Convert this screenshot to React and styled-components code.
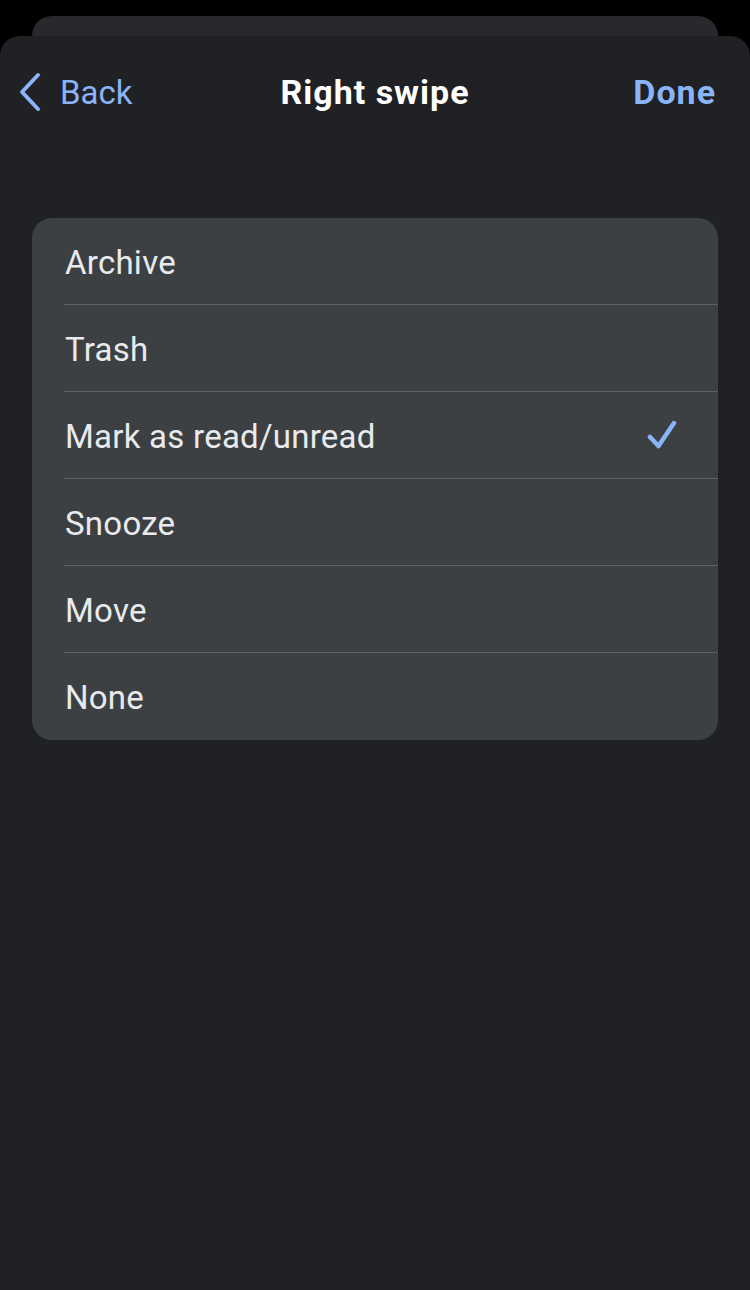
import React from "react";
import styled, { createGlobalStyle } from "styled-components";

const Global = createGlobalStyle`
  html, body { margin: 0; padding: 0; background: #000; }
  body { font-family: Roboto, "Noto Sans", sans-serif; -webkit-font-smoothing: antialiased; }
`;

const Screen = styled.div`
  width: 750px;
  height: 1290px;
  background: #000;
  padding-top: 16px;
  box-sizing: border-box;
  display: flex;
  flex-direction: column;
  overflow: hidden;
`;

const BackCard = styled.div`
  margin: 0 32px;
  height: 20px;
  background: #28292d;
  border-radius: 20px 20px 0 0;
  flex-shrink: 0;
`;

const Sheet = styled.div`
  flex: 1;
  background: #202124;
  border-radius: 20px 20px 0 0;
  display: flex;
  flex-direction: column;
`;

const NavBar = styled.div`
  height: 112px;
  display: grid;
  grid-template-columns: 1fr auto 1fr;
  align-items: center;
  padding: 0 34px 0 18px;
`;

const BackButton = styled.button`
  justify-self: start;
  display: flex;
  align-items: center;
  gap: 18px;
  background: none;
  border: none;
  padding: 0;
  color: #8ab4f8;
  font-family: inherit;
  font-size: 33px;
  font-weight: 400;
`;

const Title = styled.h1`
  margin: 0;
  padding-left: 16px;
  color: #ffffff;
  font-size: 34px;
  font-weight: 700;
  letter-spacing: 1px;
`;

const DoneButton = styled.button`
  justify-self: end;
  background: none;
  border: none;
  padding: 0;
  color: #8ab4f8;
  font-family: inherit;
  font-size: 34px;
  font-weight: 700;
  letter-spacing: 1px;
`;

const List = styled.ul`
  list-style: none;
  margin: 70px 32px 0;
  padding: 0;
  background: #3c4043;
  border-radius: 20px;
  overflow: hidden;
`;

const Row = styled.li`
  height: 87px;
  box-sizing: border-box;
  margin-left: 32px;
  padding: 2px 35px 0 1px;
  display: flex;
  align-items: center;
  justify-content: space-between;
  color: #e8eaed;
  font-size: 33px;
  letter-spacing: 0.25px;
  box-shadow: ${(p) => (p.$last ? "none" : "inset 0 -1px 0 #5f6368")};
`;

const Check = () => (
  <svg width="36" height="34" viewBox="0 0 36 34" fill="none">
    <path d="M3 17 L11.5 26 L27 3" stroke="#8ab4f8" strokeWidth="4.5" strokeLinecap="round" strokeLinejoin="round" />
  </svg>
);

const Chevron = () => (
  <svg width="24" height="40" viewBox="0 0 24 40" fill="none">
    <path d="M20 3 L4 20 L20 37" stroke="#8ab4f8" strokeWidth="4" strokeLinecap="round" strokeLinejoin="round" />
  </svg>
);

const options = ["Archive", "Trash", "Mark as read/unread", "Snooze", "Move", "None"];

export default function App() {
  return (
    <Screen>
      <Global />
      <BackCard />
      <Sheet>
        <NavBar>
          <BackButton>
            <Chevron />
            Back
          </BackButton>
          <Title>Right swipe</Title>
          <DoneButton>Done</DoneButton>
        </NavBar>
        <List>
          {options.map((o, i) => (
            <Row key={o} $last={i === options.length - 1}>
              <span>{o}</span>
              {o === "Mark as read/unread" && <Check />}
            </Row>
          ))}
        </List>
      </Sheet>
    </Screen>
  );
}
